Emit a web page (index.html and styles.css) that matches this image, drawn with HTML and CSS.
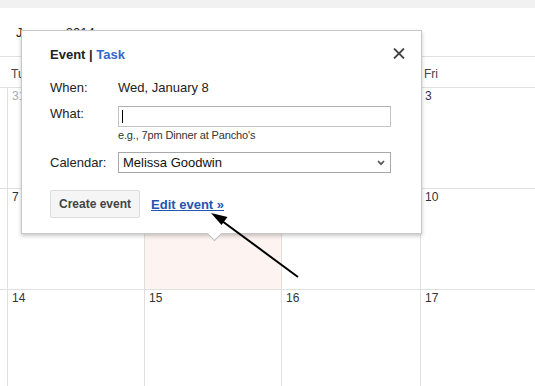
FILE: index.html
```html
<!DOCTYPE html>
<html>
<head>
<meta charset="utf-8">
<link rel="stylesheet" href="styles.css">
</head>
<body>
<div class="page">
  <div class="topbar"></div>
  <div class="month">January 2014</div>
  <div class="cal">
    <div class="dow">
      <div></div><div>Tue</div><div>Wed</div><div>Thu</div><div>Fri</div>
    </div>
    <div class="week">
      <div class="cell"></div>
      <div class="cell"><span class="d other">31</span></div>
      <div class="cell"><span class="d">1</span></div>
      <div class="cell"><span class="d">2</span></div>
      <div class="cell"><span class="d">3</span></div>
    </div>
    <div class="week">
      <div class="cell"></div>
      <div class="cell"><span class="d">7</span></div>
      <div class="cell sel"><span class="d">8</span></div>
      <div class="cell"><span class="d">9</span></div>
      <div class="cell"><span class="d">10</span></div>
    </div>
    <div class="week">
      <div class="cell"></div>
      <div class="cell"><span class="d">14</span></div>
      <div class="cell"><span class="d">15</span></div>
      <div class="cell"><span class="d">16</span></div>
      <div class="cell"><span class="d">17</span></div>
    </div>
  </div>

  <div class="popup">
    <div class="phead">
      <div class="ptitle"><b>Event</b> | <a class="task">Task</a></div>
      <svg class="close" width="12" height="11" viewBox="0 0 12 11"><path d="M1 0.5 L11 10.5 M11 0.5 L1 10.5" stroke="#444" stroke-width="1.8" fill="none"/></svg>
    </div>
    <div class="form">
      <div class="lbl">When:</div>
      <div class="val">Wed, January 8</div>
      <div class="lbl">What:</div>
      <div class="field">
        <div class="input"><span class="caret"></span></div>
        <div class="hint">e.g., 7pm Dinner at Pancho's</div>
      </div>
      <div class="lbl lbl-cal">Calendar:</div>
      <div class="select">
        <span>Melissa Goodwin</span>
        <svg width="8" height="6" viewBox="0 0 8 6"><path d="M1 1 L4 4.2 L7 1" stroke="#555" stroke-width="1.7" fill="none"/></svg>
      </div>
    </div>
    <div class="actions">
      <button class="btn">Create event</button>
      <a class="edit">Edit event »</a>
    </div>
    <div class="tail"></div>
  </div>

  <svg class="arrow" width="535" height="386" viewBox="0 0 535 386">
    <line x1="298" y1="277" x2="222" y2="221" stroke="#000" stroke-width="2"/>
    <path d="M211 213 L227.5 217 L221.5 225 Z" fill="#000"/>
  </svg>
</div>
</body>
</html>
```
FILE: styles.css
```css
html, body {
  margin: 0;
  padding: 0;
  background: #fff;
  overflow: hidden;
}
body {
  font-family: "Liberation Sans", Arial, sans-serif;
  color: #222;
}
.page {
  position: relative;
  width: 535px;
  height: 386px;
  overflow: hidden;
}
.topbar {
  height: 8px;
  background: #f1f1f1;
}
.month {
  height: 48px;
  box-sizing: border-box;
  padding: 17px 0 0 16px;
  font-size: 13px;
  line-height: 16px;
  color: #222;
}
.dow {
  display: grid;
  grid-template-columns: 7px 137px 137px 139px 1fr;
  border-top: 1px solid #e0e0e0;
  border-bottom: 1px solid #e0e0e0;
  height: 30px;
}
.dow div {
  padding: 10px 0 0 4px;
  font-size: 12px;
  line-height: 14px;
  color: #444;
  white-space: nowrap;
}
.week {
  display: grid;
  grid-template-columns: 7px 137px 137px 139px 1fr;
  height: 100px;
  border-bottom: 1px solid #e0e0e0;
}
.cell {
  border-left: 1px solid #e0e0e0;
  padding: 1px 0 0 4px;
  font-size: 12px;
  line-height: 14px;
  color: #333;
}
.cell:first-child {
  border-left: none;
  padding: 0;
}
.cell.sel {
  background: #fdf3f0;
}
.d.other {
  color: #aaa;
}

/* Popup */
.popup {
  position: absolute;
  left: 21px;
  top: 30px;
  width: 399px;
  height: 202px;
  background: #fff;
  border: 1px solid #c8c8c8;
  box-shadow: 0 2px 4px rgba(0,0,0,0.22);
}
.phead {
  display: flex;
  justify-content: space-between;
  align-items: center;
  padding: 16px 16px 0 28px;
  height: 16px;
}
.ptitle {
  font-size: 13px;
  line-height: 16px;
  font-weight: bold;
  color: #222;
}
.task {
  color: #3366cc;
}
.close {
  margin-top: -3px;
}
.form {
  display: grid;
  grid-template-columns: 68px 273px;
  margin: 17px 0 0 28px;
  font-size: 13px;
  line-height: 16px;
  row-gap: 10px;
}
.lbl {
  color: #222;
}
.lbl-cal {
  align-self: center;
  padding-top: 1px;
}
.val {
  color: #222;
}
.input {
  height: 19px;
  border: 1px solid #c4c4c4;
  border-top-color: #b0b0b0;
  position: relative;
}
.caret {
  position: absolute;
  left: 3px;
  top: 3px;
  width: 1px;
  height: 13px;
  background: #000;
}
.hint {
  margin-top: 2px;
  font-size: 11px;
  line-height: 13px;
  letter-spacing: -0.15px;
  color: #333;
}
.select {
  height: 19px;
  border: 1px solid #a8a8a8;
  display: flex;
  align-items: center;
  justify-content: space-between;
  padding: 0 5px 0 4px;
  font-size: 13px;
  color: #111;
}
.actions {
  display: flex;
  align-items: center;
  margin: 17px 0 0 28px;
}
.btn {
  height: 28px;
  box-sizing: border-box;
  padding: 0 8px;
  background: #f5f5f5;
  border: 1px solid #dcdcdc;
  border-radius: 2px;
  font-family: "Liberation Sans", Arial, sans-serif;
  font-size: 12px;
  font-weight: bold;
  color: #444;
}
.edit {
  margin-left: 11px;
  font-size: 13px;
  font-weight: bold;
  color: #2255b0;
  text-decoration: underline;
}
.tail {
  position: absolute;
  left: 187px;
  bottom: -6px;
  width: 10px;
  height: 10px;
  background: #fff;
  border-right: 1px solid #bbb;
  border-bottom: 1px solid #bbb;
  transform: rotate(45deg);
}
.arrow {
  position: absolute;
  left: 0;
  top: 0;
  pointer-events: none;
}
```
